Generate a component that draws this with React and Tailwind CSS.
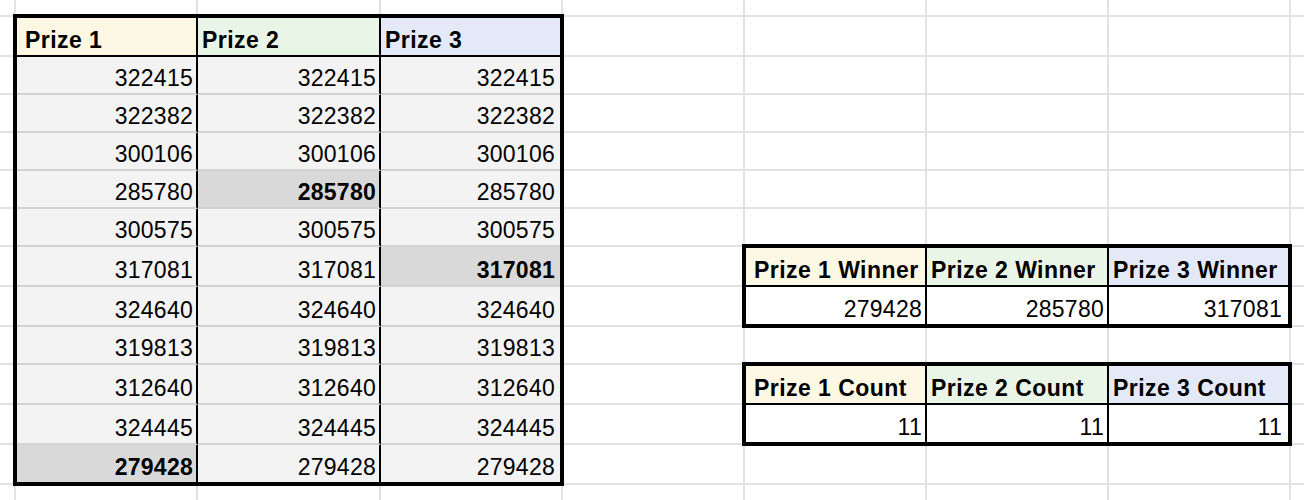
import React from "react";

const HEAD_BG = ["bg-[#fdf8e4]", "bg-[#e9f5e6]", "bg-[#e3e9f6]"];

const leftRows = [
  "322415",
  "322382",
  "300106",
  "285780",
  "300575",
  "317081",
  "324640",
  "319813",
  "312640",
  "324445",
  "279428",
];

const highlight = { "3-1": true, "5-2": true, "10-0": true };

function HeadCell({ col, children, last }) {
  return (
    <div
      className={`flex items-end pb-[2px] border-b-2 border-black font-bold tracking-[0.45px] whitespace-nowrap overflow-hidden ${
        HEAD_BG[col]
      } ${col === 0 ? "pl-[8px]" : "pl-[4px]"} ${last ? "" : "border-r-2"}`}
    >
      {children}
    </div>
  );
}

function LeftTable() {
  return (
    <div className="col-start-2 col-span-3 row-start-2 row-span-12 ml-[-3px] mt-[-3px] mr-[-1px] mb-[-1px] border-4 border-black bg-[#f3f3f3] grid grid-cols-[181px_183px_179px] grid-rows-[39px_38px_38px_38px_38px_38px_40px_40px_38px_40px_40px_37px]">
      {["Prize 1", "Prize 2", "Prize 3"].map((h, c) => (
        <HeadCell key={h} col={c} last={c === 2}>
          {h}
        </HeadCell>
      ))}
      {leftRows.map((v, r) =>
        [0, 1, 2].map((c) => {
          const hl = highlight[`${r}-${c}`];
          return (
            <div
              key={`${r}-${c}`}
              className={`flex items-end justify-end pb-[2px] tracking-[0.25px] ${
                r === leftRows.length - 1 ? "" : "border-b-2 border-b-[#d3d3d3]"
              } ${c === 2 ? "pr-[5px]" : "pr-[3px] border-r-2 border-r-black"} ${
                hl ? "bg-[#d9d9d9] font-bold" : ""
              }`}
            >
              {v}
            </div>
          );
        })
      )}
    </div>
  );
}

function SmallTable({ pos, heads, values }) {
  return (
    <div
      className={`${pos} col-start-6 col-span-3 row-span-2 ml-[-3px] mt-[-3px] mr-[-1px] mb-[-1px] border-4 border-black bg-white grid grid-cols-[181px_182px_179px] grid-rows-[39px_37px]`}
    >
      {heads.map((h, c) => (
        <HeadCell key={h} col={c} last={c === 2}>
          {h}
        </HeadCell>
      ))}
      {values.map((v, c) => (
        <div
          key={c}
          className={`flex items-end justify-end pb-[2px] tracking-[0.25px] ${
            c === 2 ? "pr-[6px]" : "pr-[3px] border-r-2 border-r-black"
          }`}
        >
          {v}
        </div>
      ))}
    </div>
  );
}

export default function App() {
  const bgCells = Array.from({ length: 9 * 14 }, (_, i) => {
    const r = Math.floor(i / 9);
    const c = i % 9;
    return (
      <div
        key={i}
        className={`${c === 8 ? "" : "border-r-2"} ${
          r === 13 ? "" : "border-b-2"
        } border-[#e2e2e2]`}
      />
    );
  });

  return (
    <div className="w-[1304px] h-[500px] overflow-hidden bg-white text-black font-['Liberation_Sans',Arial,sans-serif] text-[23px] leading-[26px] grid">
      <div className="col-start-1 row-start-1 grid grid-cols-[16px_182px_183px_182px_182px_182px_182px_182px_13px] grid-rows-[17px_40px_38px_38px_38px_38px_38px_40px_40px_38px_40px_40px_40px_15px]">
        {bgCells}
      </div>
      <div className="col-start-1 row-start-1 grid grid-cols-[16px_182px_183px_182px_182px_182px_182px_182px_13px] grid-rows-[17px_40px_38px_38px_38px_38px_38px_40px_40px_38px_40px_40px_40px_15px]">
        <LeftTable />
        <SmallTable
          pos="row-start-8"
          heads={["Prize 1 Winner", "Prize 2 Winner", "Prize 3 Winner"]}
          values={["279428", "285780", "317081"]}
        />
        <SmallTable
          pos="row-start-11"
          heads={["Prize 1 Count", "Prize 2 Count", "Prize 3 Count"]}
          values={["11", "11", "11"]}
        />
      </div>
    </div>
  );
}
